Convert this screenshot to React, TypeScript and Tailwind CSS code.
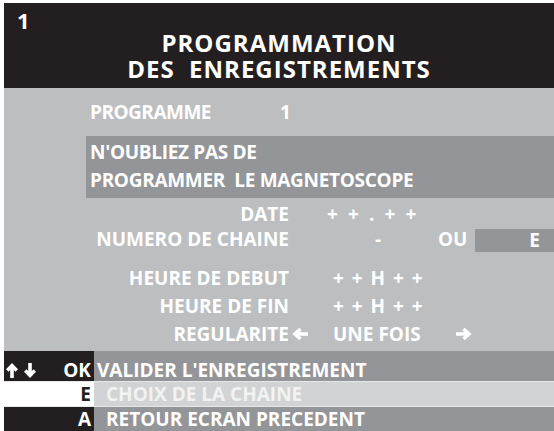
import React from 'react'

const font = { fontFamily: '"Open Sans", "Liberation Sans", sans-serif' }

const ArrowSide = ({ dir }: { dir: 'left' | 'right' }): React.ReactNode => (
  <svg width="17" height="14" viewBox="0 0 17 14">
    {dir === 'right' ? (
      <path d="M1 7 H13 M8.5 2 L14 7 L8.5 12" fill="none" stroke="white" strokeWidth="3.6" />
    ) : (
      <path d="M16 7 H4 M8.5 2 L3 7 L8.5 12" fill="none" stroke="white" strokeWidth="3.6" />
    )}
  </svg>
)

const ArrowVert = ({ dir }: { dir: 'up' | 'down' }): React.ReactNode => (
  <svg width="12" height="15" viewBox="0 0 12 15">
    {dir === 'up' ? (
      <path d="M6 15 V4 M1.2 7.5 L6 2.6 L10.8 7.5" fill="none" stroke="white" strokeWidth="3.6" />
    ) : (
      <path d="M6 0 V11 M1.2 7.5 L6 12.4 L10.8 7.5" fill="none" stroke="white" strokeWidth="3.6" />
    )}
  </svg>
)

const Row = ({
  label,
  children,
  h = 'h-[25px] leading-[25px]',
}: {
  label: React.ReactNode
  children?: React.ReactNode
  h?: string
}): React.ReactNode => (
  <div className={`flex items-stretch ${h}`}>
    <div className="w-[285px] shrink-0 text-right">{label}</div>
    {children}
  </div>
)

export default function App(): React.ReactNode {
  return (
    <div className="h-[431px] w-[554px] overflow-hidden bg-white pt-[3px] pl-[4px] text-white" style={font}>
      {/* header */}
      <div className="grid h-[85px] grid-cols-[1fr_auto_1fr] bg-[#231f20]">
        <div className="pt-[5px] pl-[13px] text-[22px] leading-[25px] font-bold">1</div>
        <div className="pt-[27px] text-center text-[24px] leading-[26px] font-bold tracking-[1px] whitespace-pre">
          <div>PROGRAMMATION</div>
          <div>DES  ENREGISTREMENTS</div>
        </div>
        <div />
      </div>

      {/* main panel */}
      <div className="h-[263px] bg-[#bcbec0] pt-[12px] text-[19px] font-bold">
        <div className="flex h-[24px] leading-[24px] tracking-[-0.5px]">
          <span className="ml-[86px] w-[190px]">PROGRAMME</span>
          <span>1</span>
        </div>
        <div className="mt-[12px] ml-[82px] h-[62px] bg-[#939598] pt-[2px] pl-[4px] leading-[28px] tracking-[-0.3px]">
          <div>N'OUBLIEZ PAS DE</div>
          <div className="whitespace-pre">PROGRAMMER  LE MAGNETOSCOPE</div>
        </div>
        <div className="mt-[4px]">
          <Row label="DATE">
            <span className="ml-[38px] tracking-[2.6px] whitespace-pre">+ + . + +</span>
          </Row>
          <Row label="NUMERO DE CHAINE">
            <span className="ml-[86px] w-[63px]">-</span>
            <span className="w-[37px]">OU</span>
            <span className="mt-[2px] flex h-[23px] flex-1 items-center justify-end bg-[#939598] pr-[14px] leading-[23px]">
              E
            </span>
          </Row>
        </div>
        <div className="mt-[12px]">
          <Row label="HEURE DE DEBUT" h="h-[28px] leading-[28px]">
            <span className="ml-[44px] tracking-[1.5px] whitespace-pre">+ + H + +</span>
          </Row>
          <Row label="HEURE DE FIN" h="h-[28px] leading-[28px]">
            <span className="ml-[44px] tracking-[1.5px] whitespace-pre">+ + H + +</span>
          </Row>
          <Row label="REGULARITE" h="h-[28px] leading-[28px]">
            <span className="ml-[3px] flex items-center">
              <ArrowSide dir="left" />
            </span>
            <span className="ml-[24px] w-[122px]">UNE FOIS</span>
            <span className="flex items-center">
              <ArrowSide dir="right" />
            </span>
          </Row>
        </div>
      </div>

      {/* footer */}
      <div className="text-[19px] font-bold">
        <div className="flex h-[30px] leading-[24px]">
          <div className="flex w-[90px] items-start justify-between bg-[#231f20] pt-[7px] pr-[3px] pl-[2px]">
            <span className="flex gap-[6px] pt-[5px]">
              <ArrowVert dir="up" />
              <ArrowVert dir="down" />
            </span>
            <span>OK</span>
          </div>
          <div className="flex-1 bg-[#939598] pt-[7px] pl-[3px]">VALIDER L'ENREGISTREMENT</div>
        </div>
        <div className="flex h-[25px] border-t border-[#e6e7e8] leading-[24px]">
          <div className="-ml-[4px] w-[94px] bg-white pr-[3px] text-right text-[#231f20]">E</div>
          <div className="flex-1 bg-[#d1d3d4] pl-[12px] text-[#f1f2f2]">CHOIX DE LA CHAINE</div>
        </div>
        <div className="flex h-[26px] border-t border-[#e6e7e8] leading-[25px]">
          <div className="w-[90px] bg-[#231f20] pr-[3px] text-right">A</div>
          <div className="flex-1 bg-[#939598] pl-[12px]">RETOUR ECRAN PRECEDENT</div>
        </div>
      </div>
    </div>
  )
}
